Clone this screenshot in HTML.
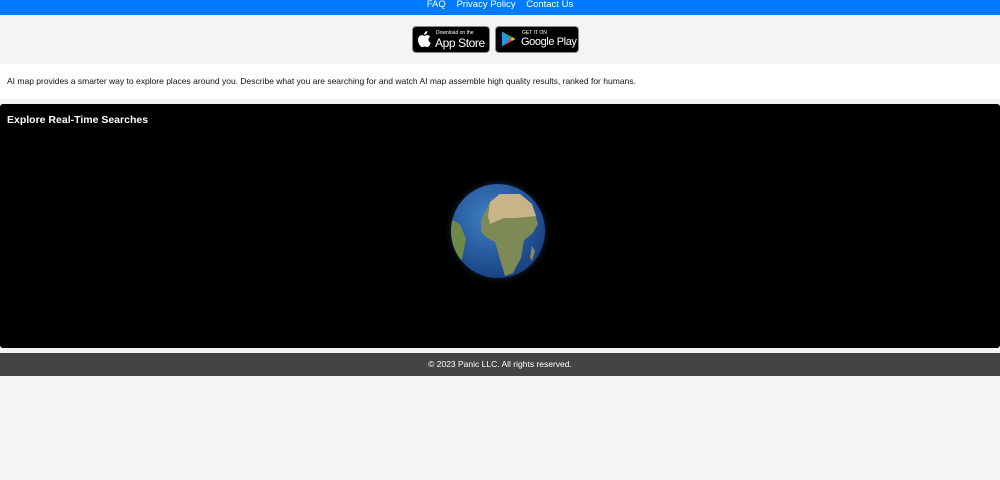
<!DOCTYPE html>
<html><head><meta charset="utf-8"><style>
body{margin:0;background:#f4f4f4;font-family:"Liberation Sans",Arial,sans-serif;width:1000px;height:480px;overflow:hidden;position:relative}
.nav{position:absolute;top:0;left:0;width:1000px;height:15px;background:#007bff;text-align:center;font-size:9.5px;color:#fff;line-height:10px}
.nav span{margin:0 4px}
.badge{position:absolute;top:26px;height:25px;background:#000;border:1px solid #888;border-radius:4px;color:#fff;white-space:nowrap}
.desc{position:absolute;top:64px;left:0;width:1000px;height:35px;background:#fff;font-size:8.5px;color:#111;line-height:35px;text-indent:7px}
.black{position:absolute;top:104px;left:0;width:1000px;height:244px;background:#000;border-radius:3px}
.black h3{margin:0;position:absolute;left:7px;top:10px;color:#fff;font-size:10.5px}
.foot{position:absolute;top:353px;left:0;width:1000px;height:23px;background:#444;color:#fff;font-size:8.5px;text-align:center;line-height:23px}
</style></head><body>
<div class="nav"><span>FAQ</span> <span>Privacy Policy</span> <span>Contact Us</span></div>
<div class="badge" style="left:412px;width:76px">
<svg style="position:absolute;left:5px;top:4px" width="13" height="16" viewBox="0 0 13 16"><path d="M10.5 8.5c0-2 1.6-2.8 1.7-2.9-.9-1.3-2.3-1.5-2.8-1.5-1.2-.1-2.300.7-2.900.7-.6 0-1.500-.7-2.500-.7C2.700 4.100 1.400 4.900.7 6.100c-1.400 2.400-.4 6 1 8 .7 1 1.500 2 2.500 2s1.400-.6 2.600-.6 1.500.6 2.500.6 1.700-1 2.400-2c.7-1.100 1-2.200 1-2.300-.1 0-2.200-.8-2.200-3.300zM8.600 2.600c.5-.7.9-1.600.8-2.600-.8 0-1.800.5-2.400 1.200-.5.600-1 1.600-.8 2.500.9.100 1.800-.4 2.400-1.100z" fill="#fff"/></svg>
<div style="position:absolute;left:23px;top:3px;font-size:5px">Download on the</div>
<div style="position:absolute;left:22px;top:9px;font-size:12px;letter-spacing:-.4px">App Store</div></div>
<div class="badge" style="left:495px;width:82px">
<svg style="position:absolute;left:6px;top:4px" width="14" height="16" viewBox="0 0 15 16"><path d="M0 0l9 8-9 8z" fill="#2196f3"/><path d="M0 0l11 6-2 2z" fill="#34a853"/><path d="M0 16l11-6-2-2z" fill="#ea4335"/><path d="M11 6l3.500 2-3.500 2-2-2z" fill="#fbbc04"/></svg>
<div style="position:absolute;left:26px;top:3px;font-size:5px">GET IT ON</div>
<div style="position:absolute;left:25px;top:9px;font-size:11px;letter-spacing:-.4px">Google Play</div></div>
<div class="desc">AI map provides a smarter way to explore places around you. Describe what you are searching for and watch AI map assemble high quality results, ranked for humans.</div>
<div class="black"><h3>Explore Real-Time Searches</h3>
<svg style="position:absolute;left:440px;top:70px" width="120" height="120" viewBox="0 0 120 120">
<defs><radialGradient id="g" cx=".4" cy=".35" r=".7"><stop offset="0" stop-color="#3f7fc4"/><stop offset="1" stop-color="#163f80"/></radialGradient>
<radialGradient id="h"><stop offset=".75" stop-color="#5aa0ff" stop-opacity=".5"/><stop offset="1" stop-color="#000" stop-opacity="0"/></radialGradient>
<clipPath id="c"><circle cx="58" cy="57" r="47"/></clipPath></defs>
<circle cx="58" cy="57" r="54" fill="url(#h)"/>
<circle cx="58" cy="57" r="47" fill="url(#g)"/>
<g clip-path="url(#c)">
<path d="M50 28l10-8 20 0 12 10 6 20-6 10-8 6-3 18-8 15-8 3-6-20-4-14-8-4-6-6 0-12z" fill="#7d8a55"/>
<path d="M50 28l10-8 20 0 12 10 4 12-20 2-12 0-14 6-2-8z" fill="#c9b48a"/>
<path d="M10 45l10 5 6 15-4 20-8 10-6-20z" fill="#6e8a4a"/>
<path d="M92 72l3 5-3 10-2-4z" fill="#8a8a5a"/>
</g></svg>
</div>
<div class="foot">© 2023 Panic LLC. All rights reserved.</div>
</body></html>
